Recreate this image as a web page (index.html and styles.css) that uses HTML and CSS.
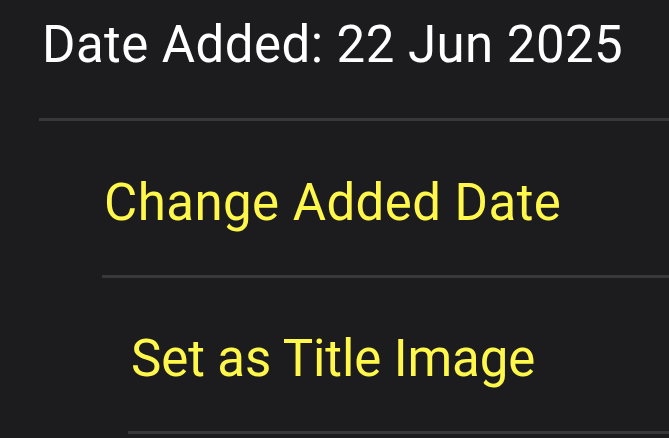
FILE: index.html
```html
<!DOCTYPE html>
<html>
<head>
<meta charset="utf-8">
<link rel="stylesheet" href="styles.css">
</head>
<body>
<div class="list">
  <div class="row row-info"><span class="label">Date Added: 22 Jun 2025</span></div>
  <div class="row row-action1"><span class="action">Change Added Date</span></div>
  <div class="row row-action2"><span class="action action-tight">Set as Title Image</span></div>
</div>
</body>
</html>
```
FILE: styles.css
```css
html, body {
  margin: 0;
  padding: 0;
  background: #1c1c1e;
  width: 669px;
  height: 438px;
  overflow: hidden;
}
body {
  font-family: Roboto, "Liberation Sans", sans-serif;
}
.list {
  display: flex;
  flex-direction: column;
}
.row {
  display: flex;
  align-items: flex-end;
  border-bottom: 3px solid #38383a;
  box-sizing: border-box;
}
.label,
.action {
  font-size: 51px;
  line-height: 1;
  letter-spacing: 0.45px;
}
.label {
  color: #ffffff;
}
.action {
  color: #fff84a;
}
.action-tight {
  letter-spacing: -0.1px;
}
.row-info {
  margin-left: 39px;
  padding-left: 3px;
  height: 121px;
  padding-bottom: 48px;
}
.row-action1 {
  margin-left: 102px;
  padding-left: 2px;
  height: 157px;
  padding-bottom: 47px;
}
.row-action2 {
  margin-left: 128px;
  padding-left: 3px;
  height: 156px;
  padding-bottom: 47px;
}
```
